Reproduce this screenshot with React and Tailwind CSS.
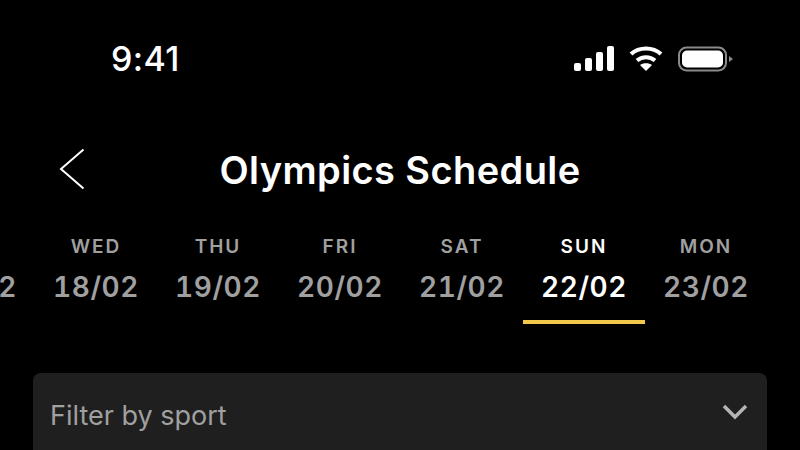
const days = [
  ["TUE", "17/02"],
  ["WED", "18/02"],
  ["THU", "19/02"],
  ["FRI", "20/02"],
  ["SAT", "21/02"],
  ["SUN", "22/02", true],
  ["MON", "23/02"],
];

export default function App() {
  return (
    <div className="w-[800px] h-[450px] overflow-hidden bg-black text-white font-['Inter',sans-serif]">
      <div className="flex items-center justify-between h-[28px] mt-[45px] pl-[111px] pr-[66px]">
        <span className="text-[34px] leading-[28px] font-medium tracking-[0.4px]">9:41</span>
        <div className="flex items-center gap-[15px]">
          <svg width="40" height="26" viewBox="0 0 40 26" fill="white">
            <rect x="0" y="17" width="7" height="8" rx="2" />
            <rect x="11" y="12" width="7" height="13" rx="2" />
            <rect x="22" y="6" width="7" height="19" rx="2" />
            <rect x="33" y="0" width="7" height="25" rx="2" />
          </svg>
          <svg width="34" height="26" viewBox="0 0 34 26" fill="none" stroke="white" strokeWidth="4">
            <path d="M2 8 C10 0.5 24 0.5 32 8" />
            <path d="M8 14.5 C13 10 21 10 26 14.5" />
            <path d="M17 25 L11 19 C14 16.5 20 16.5 23 19 Z" fill="white" stroke="none" />
          </svg>
          <svg width="56" height="26" viewBox="0 0 56 26" fill="none">
            <rect x="1" y="1.5" width="47" height="23" rx="7.5" stroke="#8a8a8a" strokeWidth="2" />
            <rect x="4" y="4.5" width="41" height="17" rx="5" fill="white" />
            <path d="M51 10 L55 13 L51 16 Z" fill="#8a8a8a" />
          </svg>
        </div>
      </div>

      <div className="relative flex items-center justify-center h-[44px] mt-[75px]">
        <svg className="absolute left-[59px] top-0" width="27" height="42" viewBox="0 0 27 42" fill="none" stroke="white" strokeWidth="2">
          <path d="M24.5 1.5 L2 21 L24.5 40.5" />
        </svg>
        <h1 className="text-[38px] leading-[44px] font-semibold tracking-[0.4px]">Olympics Schedule</h1>
      </div>

      <div className="flex ml-[-87px] mt-[43px] w-[854px]">
        {days.map(([day, date, active]) => (
          <div key={date} className="w-[122px] shrink-0 flex flex-col items-center">
            <span className={`text-[19px] leading-[24px] font-semibold tracking-[2px] ${active ? "text-white" : "text-[#a0a0a0]"}`}>{day}</span>
            <span className={`mt-[12px] text-[28px] leading-[32px] font-semibold tabular-nums tracking-[0.6px] ${active ? "text-white" : "text-[#a0a0a0]"}`}>{date}</span>
            <div className={`mt-[17px] h-[4px] w-full ${active ? "bg-[#f2c84b]" : "bg-transparent"}`} />
          </div>
        ))}
      </div>

      <div className="mx-[33px] mt-[49px] h-[120px] rounded-[8px] bg-[#1f1f1f] flex items-start justify-between pl-[17px] pr-[19px] pt-[26px]">
        <span className="text-[27px] leading-[34px] text-[#a0a0a0]">Filter by sport</span>
        <svg className="mt-[4px]" width="26" height="18" viewBox="0 0 26 18" fill="none" stroke="#b5b5b5" strokeWidth="3.5">
          <path d="M2 3 L13 14 L24 3" />
        </svg>
      </div>
    </div>
  );
}
